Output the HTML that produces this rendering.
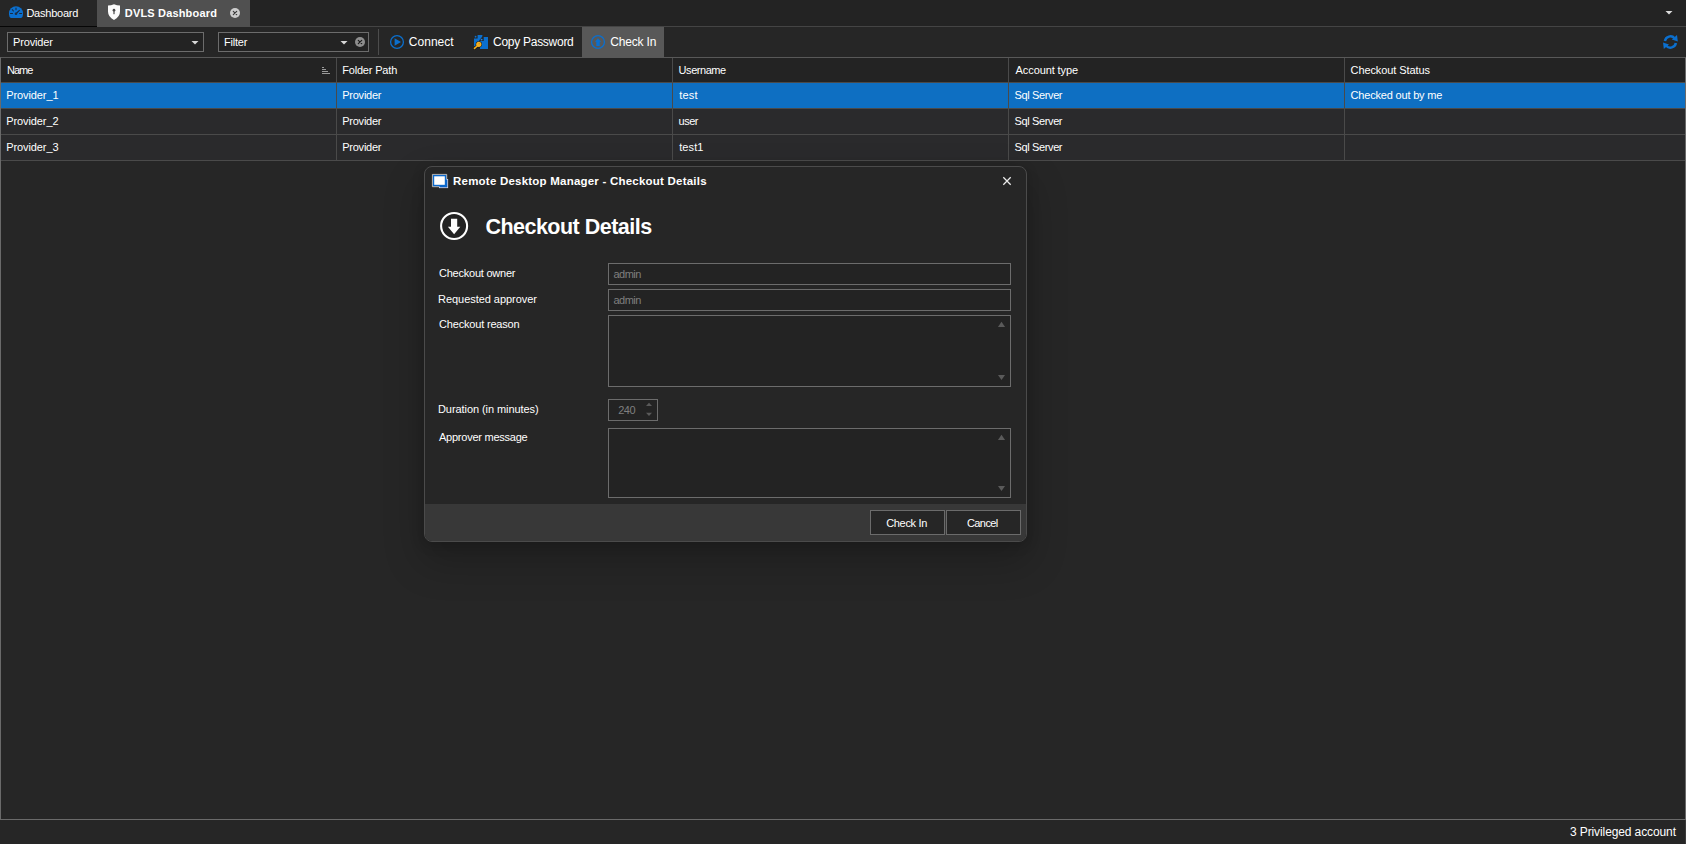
<!DOCTYPE html>
<html lang="en">
<head>
<meta charset="utf-8">
<title>DVLS Dashboard</title>
<style>
*{box-sizing:border-box;margin:0;padding:0}
html,body{width:1686px;height:844px;overflow:hidden;background:#262626}
body{position:relative;font-family:"Liberation Sans",sans-serif;font-size:11px;color:#fff;-webkit-font-smoothing:antialiased}
.a{position:absolute}
.t{position:absolute;white-space:nowrap;line-height:14px;height:14px}
.s12{font-size:12px;line-height:16px;height:16px}
.b{font-weight:bold;color:#fff}
/* tab strip */
#tabL{left:0;top:0;width:97px;height:27px;background:#262626;border-bottom:1px solid #060606}
#tabA{left:97px;top:0;width:153px;height:27px;background:#505050}
#tabR{left:250px;top:0;width:1436px;height:27px;background:#232323;border-bottom:1px solid #444}
/* toolbar */
.box{border:1px solid #6c6c6c;background:#232323}
#cb1{left:7px;top:32px;width:197px;height:20px}
#cb2{left:218px;top:32px;width:151px;height:20px}
#sep{left:378px;top:29px;width:1px;height:26px;background:#4c4c4c}
#btnCI{left:582px;top:27px;width:82px;height:30px;background:#585858}
/* table */
#grid{left:0;top:57px;width:1686px;height:763px;border:1px solid #6a6a6a;border-top-color:#585858;background:#262626}
#hdr{left:1px;top:58px;width:1684px;height:24px;background:#232323}
.hl{left:1px;width:1684px;height:1px;background:#4a4a4a}
.vl{top:58px;width:1px;height:103px;background:#4a4a4a}
.row{left:1px;width:1684px;height:25px;background:#2a2a2c}
.sel{background:#0e6fc2}
/* dialog */
#dlg{left:424px;top:166px;width:603px;height:376px;border:1px solid #4b4b4b;border-radius:8px;background:#262626;box-shadow:0 18px 38px 4px rgba(0,0,0,.2),0 3px 12px 1px rgba(0,0,0,.15);overflow:hidden}
#foot{left:425px;top:504px;width:601px;height:37px;background:#383838;border-radius:0 0 7px 7px}
.in{border:1px solid #6c6c6c;background:#232323}
.btn{border:1px solid #6b6b6b;background:#262626}
.g{color:#7f7f7f}
</style>
</head>
<body>
<!-- tab strip -->
<div class="a" id="tabL"></div>
<div class="a" id="tabA"></div>
<div class="a" id="tabR"></div>
<span class="t" id="tx_dash" style="left:26.4px;top:6px;letter-spacing:-0.23px">Dashboard</span>
<span class="t b" id="tx_dvls" style="left:124.8px;top:6px;letter-spacing:0.17px">DVLS Dashboard</span>

<!-- toolbar -->
<div class="a box" id="cb1"></div>
<div class="a box" id="cb2"></div>
<span class="t" id="tx_prov" style="left:13.0px;top:35px;letter-spacing:-0.14px">Provider</span>
<span class="t" id="tx_filter" style="left:224.0px;top:35px;letter-spacing:-0.2px">Filter</span>
<div class="a" id="sep"></div>
<div class="a" id="btnCI"></div>
<span class="t s12" id="tx_connect" style="left:408.8px;top:34px;letter-spacing:0.03px">Connect</span>
<span class="t s12" id="tx_copy" style="left:493.0px;top:34px;letter-spacing:-0.27px">Copy Password</span>
<span class="t s12" id="tx_checkin" style="left:610.2px;top:34px;letter-spacing:-0.17px">Check In</span>

<!-- table -->
<div class="a" id="grid"></div>
<div class="a" id="hdr"></div>
<div class="a row sel" style="top:83px"></div>
<div class="a row" style="top:109px"></div>
<div class="a row" style="top:135px"></div>
<div class="a hl" style="top:82px"></div>
<div class="a hl" style="top:108px"></div>
<div class="a hl" style="top:134px"></div>
<div class="a hl" style="top:160px"></div>
<div class="a vl" style="left:336px"></div>
<div class="a vl" style="left:672px"></div>
<div class="a vl" style="left:1008px"></div>
<div class="a vl" style="left:1344px"></div>

<span class="t" id="h1" style="left:7px;top:63px;letter-spacing:-1.0px">Name</span>
<span class="t" id="h2" style="left:342.2px;top:63px;letter-spacing:-0.18px">Folder Path</span>
<span class="t" id="h3" style="left:678.6px;top:63px;letter-spacing:-0.45px">Username</span>
<span class="t" id="h4" style="left:1015.6px;top:63px;letter-spacing:-0.1px">Account type</span>
<span class="t" id="h5" style="left:1350.6px;top:63px;letter-spacing:-0.1px">Checkout Status</span>

<span class="t" id="r1c1" style="left:6.2px;top:88px;letter-spacing:-0.09px">Provider_1</span>
<span class="t" id="r1c2" style="left:342.2px;top:88px;letter-spacing:-0.23px">Provider</span>
<span class="t" id="r1c3" style="left:679.2px;top:88px;letter-spacing:0.2px">test</span>
<span class="t" id="r1c4" style="left:1014.6px;top:88px;letter-spacing:-0.38px">Sql Server</span>
<span class="t" id="r1c5" style="left:1350.6px;top:88px;letter-spacing:-0.19px">Checked out by me</span>

<span class="t" id="r2c1" style="left:6.2px;top:114px;letter-spacing:-0.09px">Provider_2</span>
<span class="t" id="r2c2" style="left:342.2px;top:114px;letter-spacing:-0.23px">Provider</span>
<span class="t" id="r2c3" style="left:678.6px;top:114px;letter-spacing:-0.54px">user</span>
<span class="t" id="r2c4" style="left:1014.6px;top:114px;letter-spacing:-0.38px">Sql Server</span>

<span class="t" id="r3c1" style="left:6.2px;top:140px;letter-spacing:-0.09px">Provider_3</span>
<span class="t" id="r3c2" style="left:342.2px;top:140px;letter-spacing:-0.23px">Provider</span>
<span class="t" id="r3c3" style="left:679.2px;top:140px;letter-spacing:0.09px">test1</span>
<span class="t" id="r3c4" style="left:1014.6px;top:140px;letter-spacing:-0.38px">Sql Server</span>


<!-- page icons -->
<svg class="a" style="left:0;top:0" width="1686" height="160" viewBox="0 0 1686 160">
<!-- dashboard gauge -->
<g transform="translate(9,6)">
<path d="M0 7.2A7 7 0 0 1 14 7.2V8.4Q14 10.6 12.2 12H1.8Q0 10.6 0 8.4Z" fill="#0b6fce"/>
<g stroke="#18293f" stroke-width="1.05" stroke-linecap="round" fill="none">
<path d="M1.5 7.5H3.5M10.6 7.5H12.6M7 2V3.6M3.3 3.7L4.4 5M7.2 7.5L10.4 4.4"/>
</g>
<circle cx="7" cy="7.8" r="1.3" fill="#1d2f45"/>
</g>
<!-- shield -->
<g transform="translate(108,4)">
<path d="M6 0.2Q9 1.4 12 1.5V7.5Q12 12.8 6 16Q0 12.8 0 7.5V1.5Q3 1.4 6 0.2Z" fill="#fdfdfd"/>
<circle cx="6" cy="6.2" r="1.35" fill="#4a4a4a"/>
<rect x="5.4" y="6.4" width="1.2" height="3.8" fill="#4a4a4a"/>
</g>
<!-- tab close -->
<circle cx="235" cy="13" r="5" fill="#cdcdcd"/>
<path d="M233.3 11.3L236.7 14.7M236.7 11.3L233.3 14.7" stroke="#3c3c3c" stroke-width="1.2" stroke-linecap="round"/>
<!-- tab strip dropdown -->
<path d="M1665.5 11H1672.5L1669 14.6Z" fill="#dcdcdc"/>
<!-- combobox arrows -->
<path d="M191.5 41H198.5L195 44.6Z" fill="#d8d8d8"/>
<path d="M340.5 41H347.5L344 44.6Z" fill="#d8d8d8"/>
<!-- filter clear -->
<circle cx="360" cy="42" r="5" fill="#8e8e8e"/>
<path d="M358.3 40.3L361.7 43.7M361.7 40.3L358.3 43.7" stroke="#1c1c1c" stroke-width="1.2" stroke-linecap="round"/>
<!-- play -->
<circle cx="397" cy="42" r="6.4" fill="none" stroke="#0b6fce" stroke-width="1.3"/>
<path d="M394.6 38.3V45.7L401 42Z" fill="#0b6fce"/>
<!-- copy password -->
<g>
<path d="M474 38.6H477.6V35H482.4V46.2H474Z" fill="#0b6fce"/>
<circle cx="475.6" cy="36.7" r="0.9" fill="#0b6fce"/>
<path d="M479.3 40.2L482.6 36.3H488.7V49.7H479.3Z" fill="#262626"/>
<path d="M480 41H483.7V37H488V49H480Z" fill="#0b6fce"/>
<circle cx="481.6" cy="39.6" r="0.95" fill="#2a85dd"/>
<path d="M477.2 46L474.5 48.5" stroke="#1d1a14" stroke-width="2.9" stroke-linecap="round"/>
<circle cx="478.8" cy="44.3" r="3.15" fill="#1d1a14"/>
<path d="M477.2 46L474.5 48.4" stroke="#f5b021" stroke-width="1.6" stroke-linecap="round"/>
<circle cx="478.8" cy="44.3" r="2.6" fill="#f5b021"/>
<circle cx="479.2" cy="43.8" r="0.75" fill="#c4922a"/>
</g>
<!-- refresh -->
<g fill="none" stroke="#0b6fce" stroke-width="2.5">
<path id="rf" d="M1664.9 40.9A5.6 5.6 0 0 1 1674.6 38.3"/>
<path d="M1675.9 43.1A5.6 5.6 0 0 1 1666.2 45.7"/>
</g>
<path d="M1677 35L1677.8 41.5L1671.8 39.6Z" fill="#0b6fce"/>
<path d="M1663.8 49L1663 42.5L1669 44.4Z" fill="#0b6fce"/>
<!-- sort glyph -->
<path d="M322 67.5H324M322 69.5H326M322 71.5H328M322 73.5H330" stroke="#9a9a9a" stroke-width="1"/>
</svg>
<svg class="a" style="left:582px;top:27px" width="82" height="30" viewBox="582 27 82 30">
<circle cx="598" cy="42" r="6.45" fill="none" stroke="#0b6fce" stroke-width="1.3"/>
<path d="M598 38.2L601.1 41.7H599.8V46H596.3V41.7H594.9Z" fill="#0b6fce"/>
</svg>
<!-- status bar -->
<div class="a" style="left:1685px;top:820px;width:1px;height:24px;background:#3c3c3c"></div>
<span class="t s12" id="tx_status" style="left:1570px;top:824px;letter-spacing:-0.11px">3 Privileged account</span>

<!-- dialog -->
<div class="a" id="dlg"></div>
<div class="a" id="foot"></div>
<span class="t b" id="tx_title" style="left:453.0px;top:174px;font-size:11.5px;letter-spacing:0.22px">Remote Desktop Manager - Checkout Details</span>
<span class="t b" id="tx_head" style="left:485.4px;top:213px;font-size:21.5px;line-height:28px;height:28px;letter-spacing:-0.51px">Checkout Details</span>

<span class="t" id="l1" style="left:439.0px;top:266px;letter-spacing:-0.23px">Checkout owner</span>
<span class="t" id="l2" style="left:438.0px;top:292px;letter-spacing:-0.04px">Requested approver</span>
<span class="t" id="l3" style="left:439.0px;top:317px;letter-spacing:-0.18px">Checkout reason</span>
<span class="t" id="l4" style="left:438.0px;top:402px;letter-spacing:-0.07px">Duration (in minutes)</span>
<span class="t" id="l5" style="left:439.0px;top:430px;letter-spacing:-0.24px">Approver message</span>

<div class="a in" style="left:608px;top:263px;width:403px;height:22px"></div>
<div class="a in" style="left:608px;top:289px;width:403px;height:22px"></div>
<div class="a in" style="left:608px;top:315px;width:403px;height:72px"></div>
<div class="a in" style="left:608px;top:399px;width:50px;height:22px"></div>
<div class="a in" style="left:608px;top:428px;width:403px;height:70px"></div>
<span class="t g" id="v1" style="left:613.4px;top:267px;letter-spacing:-0.5px">admin</span>
<span class="t g" id="v2" style="left:613.4px;top:293px;letter-spacing:-0.5px">admin</span>
<span class="t g" id="v3" style="left:618.2px;top:403px;letter-spacing:-0.5px">240</span>

<div class="a btn" style="left:870px;top:510px;width:75px;height:25px"></div>
<div class="a btn" style="left:946px;top:510px;width:75px;height:25px"></div>
<span class="t" id="b1" style="left:886.2px;top:516px;letter-spacing:-0.32px">Check In</span>
<span class="t" id="b2" style="left:967.0px;top:516px;letter-spacing:-0.6px">Cancel</span>

<svg class="a" style="left:424px;top:166px" width="603" height="376" viewBox="424 166 603 376">
<!-- title icon -->
<rect x="439.4" y="179.4" width="8.3" height="8.3" fill="#0b63c8" stroke="#d4d8ee" stroke-width="0.8"/>
<rect x="432.7" y="174.7" width="13.8" height="11.8" fill="#0b68cb"/>
<path d="M439 186.7H432.4V174.4H446.7V179" fill="none" stroke="#d9d6d2" stroke-width="0.8"/>
<rect x="434.2" y="176.3" width="10.6" height="8.5" fill="#ffffff"/>
<!-- close -->
<path d="M1003.3 177.3L1010.7 184.7M1010.7 177.3L1003.3 184.7" stroke="#ececec" stroke-width="1.25"/>
<!-- header icon -->
<circle cx="454.1" cy="226" r="13" fill="#232323" stroke="#ffffff" stroke-width="2.1"/>
<path d="M451 218.8H457.2V226.8H460.3L454.1 234.3L447.9 226.8H451Z" fill="#ffffff"/>
<!-- scroll arrows -->
<g fill="#5a5a5a">
<path d="M1001.5 321.8L1005.05 326.9H997.95Z"/>
<path d="M1001.5 380L1005.05 374.9H997.95Z"/>
<path d="M1001.5 434.8L1005.05 439.9H997.95Z"/>
<path d="M1001.5 491L1005.05 485.9H997.95Z"/>
<path d="M649 402.7L652 406H646Z"/>
<path d="M649 416.1L652 412.7H646Z"/>
</g>
</svg>
</body>
</html>
